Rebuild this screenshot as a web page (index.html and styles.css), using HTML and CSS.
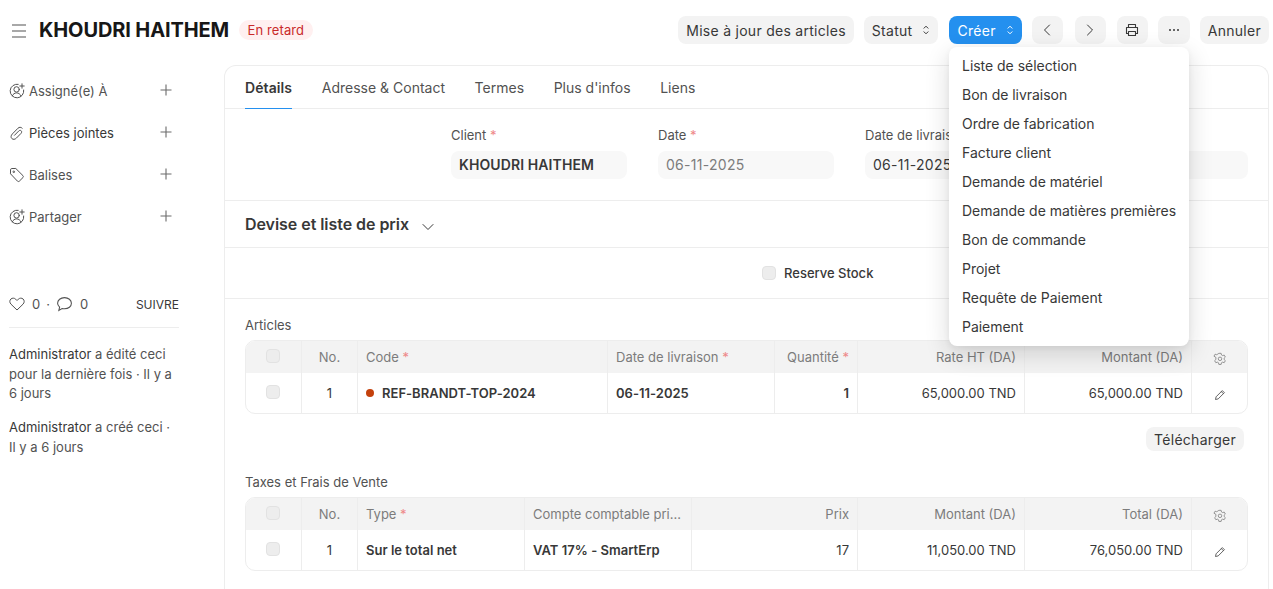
FILE: index.html
```html
<!DOCTYPE html>
<html lang="fr">
<head>
<meta charset="utf-8">
<title>KHOUDRI HAITHEM</title>
<link rel="stylesheet" href="styles.css">
</head>
<body>
<svg class="defs" width="0" height="0">
  <symbol id="i-assign" viewBox="0 0 16 16"><g fill="none" stroke="currentColor" stroke-width="1" stroke-linecap="round"><path d="M9.200 1.300A6.800 6.800 0 1 0 14.700 7"/><circle cx="7.600" cy="6.400" r="2.700"/><path d="M3.300 12.800c.7-1.800 2.400-2.900 4.300-2.900s3.600 1.100 4.300 2.900"/><path d="M13 .8v4.400M10.800 3h4.400"/></g></symbol>
  <symbol id="i-plus" viewBox="0 0 12 12"><path d="M6 .5v11M.5 6h11" fill="none" stroke="currentColor" stroke-width="1.100"/></symbol>
  <symbol id="i-clip" viewBox="0 0 16 16"><path d="M13.200 3.200c-1.200-1.300-3-1.200-4.200 0L3.400 8.900c-1.600 1.700-1.700 3.600-.5 4.700 1.200 1.100 3 1 4.500-.5l4.600-4.700c.8-.9.9-1.900.2-2.600-.7-.7-1.700-.6-2.600.3L5.500 10.300" fill="none" stroke="currentColor" stroke-linecap="round"/></symbol>
  <symbol id="i-tag" viewBox="0 0 16 16"><g fill="none" stroke="currentColor" stroke-linejoin="round"><path d="M1.500 2.800c0-.7.6-1.300 1.300-1.300h4l7.200 7.200c.5.500.5 1.300 0 1.800l-3.700 3.700c-.5.500-1.300.5-1.800 0L1.500 6.800z"/><circle cx="4.800" cy="4.800" r=".8"/></g></symbol>
  <symbol id="i-updown" viewBox="0 0 8 12"><path d="M2 4.200 4 2.200l2 2M2 7.800l2 2 2-2" fill="none" stroke="currentColor" stroke-linecap="round" stroke-linejoin="round"/></symbol>
  <symbol id="i-gear" viewBox="0 0 16 16"><g fill="none" stroke="currentColor" stroke-width=".9" stroke-linejoin="round"><path d="M6.700 1.500h2.600l.4 1.900 1.300.7 1.800-.6 1.300 2.300-1.400 1.300v1.500l1.400 1.300-1.300 2.300-1.800-.6-1.300.7-.4 1.900H6.700l-.4-1.900-1.300-.7-1.800.6-1.300-2.300 1.400-1.300V6.100L1.100 4.800l1.300-2.300 1.800.6 1.300-.7z"/><circle cx="8" cy="7.800" r="2"/></g></symbol>
  <symbol id="i-pen" viewBox="0 0 12 12"><path d="M1.500 10.500l.6-2.700L8.300 1.600l2.100 2.100-6.200 6.200zM7.300 2.600l2.100 2.100" fill="none" stroke="currentColor" stroke-width=".9" stroke-linejoin="round"/></symbol>
</svg>

<header class="topbar">
  <div class="title-area">
    <svg class="burger" width="14" height="14" viewBox="0 0 14 14"><path d="M0 1h14M0 7h14M0 13h14" stroke="#525252" stroke-width="1.100" fill="none"/></svg>
    <h1 class="title">KHOUDRI HAITHEM</h1>
    <span class="badge">En retard</span>
  </div>
  <div class="actions">
    <button class="btn">Mise à jour des articles</button>
    <button class="btn">Statut <svg class="updown" width="8" height="12"><use href="#i-updown"/></svg></button>
    <button class="btn primary">Créer <svg class="updown" width="8" height="12"><use href="#i-updown"/></svg></button>
    <button class="btn icon-btn prev"><svg width="8" height="14" viewBox="0 0 8 14"><path d="M6.500 2 1.500 7l5 5" fill="none" stroke="currentColor" stroke-linecap="round" stroke-linejoin="round"/></svg></button>
    <button class="btn icon-btn next"><svg width="8" height="14" viewBox="0 0 8 14"><path d="M1.500 2l5 5-5 5" fill="none" stroke="currentColor" stroke-linecap="round" stroke-linejoin="round"/></svg></button>
    <button class="btn icon-btn print"><svg width="14" height="14" viewBox="0 0 14 14"><g fill="none" stroke="currentColor" stroke-width="1.100" stroke-linejoin="round"><path d="M3.500 4.500V1.500h7v3M3.500 10.500H1.500v-6h11v6h-2"/><path d="M3.500 8.500h7v4h-7z"/></g></svg></button>
    <button class="btn icon-btn more"><svg width="12" height="4" viewBox="0 0 12 4"><g fill="currentColor"><circle cx="2" cy="2" r="1"/><circle cx="6" cy="2" r="1"/><circle cx="10" cy="2" r="1"/></g></svg></button>
    <button class="btn">Annuler</button>
  </div>
  <ul class="menu">
    <li>Liste de sélection</li>
    <li>Bon de livraison</li>
    <li>Ordre de fabrication</li>
    <li>Facture client</li>
    <li>Demande de matériel</li>
    <li>Demande de matières premières</li>
    <li>Bon de commande</li>
    <li>Projet</li>
    <li>Requête de Paiement</li>
    <li>Paiement</li>
  </ul>
</header>

<div class="layout">
  <aside class="sidebar">
    <div class="side-row"><svg class="side-icon" width="16" height="16"><use href="#i-assign"/></svg><span class="side-label">Assigné(e) À</span><svg class="side-plus" width="12" height="12"><use href="#i-plus"/></svg></div>
    <div class="side-row"><svg class="side-icon" width="16" height="16"><use href="#i-clip"/></svg><span class="side-label dark">Pièces jointes</span><svg class="side-plus" width="12" height="12"><use href="#i-plus"/></svg></div>
    <div class="side-row"><svg class="side-icon" width="16" height="16"><use href="#i-tag"/></svg><span class="side-label">Balises</span><svg class="side-plus" width="12" height="12"><use href="#i-plus"/></svg></div>
    <div class="side-row"><svg class="side-icon" width="16" height="16"><use href="#i-assign"/></svg><span class="side-label">Partager</span><svg class="side-plus" width="12" height="12"><use href="#i-plus"/></svg></div>

    <div class="stats">
      <svg width="16" height="14" viewBox="0 0 16 14"><path d="M8 13 2 7.200C.4 5.600.5 3.300 1.900 2 3.300.8 5.400.9 6.700 2.200L8 3.500l1.300-1.300C10.600.9 12.700.8 14.100 2c1.400 1.300 1.500 3.600-.1 5.200z" fill="none" stroke="#525252"/></svg>
      <span class="count">0</span><span class="dot">·</span>
      <svg width="17" height="16" viewBox="0 0 16 15"><path d="M8 1.500c3.700 0 6.500 2.300 6.500 5.300S11.700 12 8 12c-.8 0-1.600-.1-2.300-.3l-3 1.800.7-3C2.300 9.500 1.500 8.200 1.500 6.800c0-3 2.800-5.300 6.500-5.300z" fill="none" stroke="#525252"/></svg>
      <span class="count">0</span>
      <span class="follow">SUIVRE</span>
    </div>
    <div class="activity">
      <p><span class="who">Administrator</span> a édité ceci pour la dernière fois · Il y a 6 jours</p>
      <p><span class="who">Administrator</span> a créé ceci · Il y a 6 jours</p>
    </div>
  </aside>

  <main class="card">
    <nav class="tabs">
      <span class="tab active">Détails</span>
      <span class="tab">Adresse &amp; Contact</span>
      <span class="tab">Termes</span>
      <span class="tab">Plus d'infos</span>
      <span class="tab">Liens</span>
    </nav>

    <section class="form-grid">
      <div class="field">
        <label class="flabel">Client <i>*</i></label>
        <div class="input strong">KHOUDRI HAITHEM</div>
      </div>
      <div class="field">
        <label class="flabel">Date <i>*</i></label>
        <div class="input muted">06-11-2025</div>
      </div>
      <div class="field">
        <label class="flabel">Date de livraison</label>
        <div class="input">06-11-2025</div>
      </div>
      <div class="field">
        <label class="flabel">&nbsp;</label>
        <div class="input">&nbsp;</div>
      </div>
    </section>

    <section class="collapse-head">
      <h2>Devise et liste de prix</h2>
      <svg width="12" height="8" viewBox="0 0 12 8"><path d="M1 1.500l5 5 5-5" fill="none" stroke="#383838" stroke-linecap="round" stroke-linejoin="round"/></svg>
    </section>

    <section class="stock-row">
      <span class="check"></span>
      <span class="stock-label">Reserve Stock</span>
    </section>

    <section class="tables">
      <div class="tbl-title">Articles</div>
      <div class="tbl tbl-items">
        <div class="tr thead">
          <div class="td c"><span class="check"></span></div>
          <div class="td c">No.</div>
          <div class="td"><span>Code <i>*</i></span></div>
          <div class="td"><span>Date de livraison <i>*</i></span></div>
          <div class="td r"><span>Quantité <i>*</i></span></div>
          <div class="td r">Rate HT (DA)</div>
          <div class="td r">Montant (DA)</div>
          <div class="td c"><svg class="gear" width="14" height="14"><use href="#i-gear"/></svg></div>
        </div>
        <div class="tr tbody">
          <div class="td c"><span class="check"></span></div>
          <div class="td c">1</div>
          <div class="td strong"><span class="status-dot"></span>REF-BRANDT-TOP-2024</div>
          <div class="td strong">06-11-2025</div>
          <div class="td r strong">1</div>
          <div class="td r">65,000.00 TND</div>
          <div class="td r">65,000.00 TND</div>
          <div class="td c"><svg class="pen" width="12" height="12"><use href="#i-pen"/></svg></div>
        </div>
      </div>
      <div class="tbl-actions"><button class="btn small">Télécharger</button></div>

      <div class="tbl-title second">Taxes et Frais de Vente</div>
      <div class="tbl tbl-taxes">
        <div class="tr thead">
          <div class="td c"><span class="check"></span></div>
          <div class="td c">No.</div>
          <div class="td"><span>Type <i>*</i></span></div>
          <div class="td">Compte comptable pri...</div>
          <div class="td r">Prix</div>
          <div class="td r">Montant (DA)</div>
          <div class="td r">Total (DA)</div>
          <div class="td c"><svg class="gear" width="14" height="14"><use href="#i-gear"/></svg></div>
        </div>
        <div class="tr tbody">
          <div class="td c"><span class="check"></span></div>
          <div class="td c">1</div>
          <div class="td strong">Sur le total net</div>
          <div class="td strong">VAT 17% - SmartErp</div>
          <div class="td r">17</div>
          <div class="td r">11,050.00 TND</div>
          <div class="td r">76,050.00 TND</div>
          <div class="td c"><svg class="pen" width="12" height="12"><use href="#i-pen"/></svg></div>
        </div>
      </div>
    </section>
  </main>
</div>
</body>
</html>
```

FILE: styles.css
```css
* { box-sizing: border-box; }
html, body { margin: 0; height: 589px; overflow: hidden; }
body { font-family: Inter, "Liberation Sans", sans-serif; font-size: 13px; color: #383838; background: #fff; }
.defs { position: absolute; }

.topbar { position: relative; height: 65px; padding: 16px 4px 0 12px; display: flex; justify-content: space-between; align-items: flex-start; }
.title-area { display: flex; align-items: center; height: 28px; }
.burger { margin-top: 1px; }
.title { margin: 0 0 0 13px; font-size: 20px; font-weight: 700; color: #171717; line-height: 28px; letter-spacing: -0.12px; }
.badge { margin-left: 10px; height: 20px; line-height: 20px; padding: 0 8.5px; border-radius: 10px; background: #fff0f0; color: #c92a2a; font-size: 13px; letter-spacing: .1px; }

.actions { display: flex; gap: 10px; }
.btn { font-family: inherit; font-size: 14px; letter-spacing: .02em; height: 28px; padding: 0 8px; border: 0; border-radius: 8px; background: #f3f3f3; color: #383838; display: inline-flex; align-items: center; gap: 10px; white-space: nowrap; }
.btn.primary { background: #2490ef; color: #fff; margin-left: 1px; }
.icon-btn { width: 31px; padding: 0; justify-content: center; }
.icon-btn.next { margin-left: 2px; }
.icon-btn.print { margin-left: 1px; }
.icon-btn.more { width: 32px; }
.btn.small { height: 24px; }

.menu { position: absolute; left: 949px; top: 47px; width: 240px; margin: 0; padding: 4px 0 5px; list-style: none; background: #fff; border-radius: 8px; box-shadow: 0 2px 6px rgba(23,23,23,.05), 0 8px 24px rgba(23,23,23,.16); z-index: 5; }
.menu li { height: 29px; line-height: 29px; padding-left: 13px; font-size: 14px; letter-spacing: -.03px; color: #383838; white-space: nowrap; }

.layout { display: flex; height: 524px; padding-left: 9px; padding-right: 4px; gap: 45px; }
.sidebar { width: 170px; flex: none; padding-top: 5px; }
.side-row { display: flex; align-items: center; height: 42px; }
.side-icon { color: #525252; flex: none; }
.side-label { margin-left: 4px; font-size: 13px; color: #525252; }
.side-label.dark { color: #383838; }
.side-plus { margin-left: auto; margin-right: 7px; margin-top: -2px; color: #6b6b6b; }

.stats { display: flex; align-items: center; margin-top: 56px; height: 20px; font-size: 13px; color: #525252; }
.count { margin-left: 7px; }
.dot { margin: 0 6px; }
.follow { margin-left: auto; font-size: 12px; color: #383838; }
.activity { margin-top: 13px; padding-top: 17px; border-top: 1px solid #ededed; font-size: 13px; line-height: 19.7px; color: #525252; }
.activity p { margin: 0 0 14px; }
.who { color: #383838; }

.card { flex: 1; min-width: 0; border: 1px solid #ededed; border-bottom: 0; border-radius: 12px 12px 0 0; }
.tabs { display: flex; gap: 29.6px; height: 43px; padding-left: 20px; border-bottom: 1px solid #ededed; }
.tab { font-size: 14px; line-height: 44px; color: #525252; height: 43px; }
.tab.active { font-weight: 600; color: #383838; letter-spacing: .1px; border-bottom: 1px solid #2490ef; }

.form-grid { display: grid; grid-template-columns: repeat(4, 176px); column-gap: 31px; justify-content: end; padding: 18px 20px 21px 0; border-bottom: 1px solid #ededed; }
.flabel { display: block; font-size: 13px; line-height: 16px; margin-bottom: 8px; color: #525252; white-space: nowrap; }
i { font-style: normal; color: #e88; }
.input { height: 28px; line-height: 28px; padding: 0 8px; border-radius: 8px; background: #f8f8f8; font-size: 14px; letter-spacing: .02em; color: #383838; white-space: nowrap; overflow: hidden; }
.input.strong { font-weight: 600; letter-spacing: .1px; }
.input.muted { color: #7c7c7c; }

.collapse-head { display: flex; align-items: center; gap: 13px; height: 47px; padding-left: 20px; border-bottom: 1px solid #ededed; }
.collapse-head h2 { margin: 0; font-size: 16px; font-weight: 600; letter-spacing: -.05px; color: #383838; }
.collapse-head svg { margin-top: 5px; }

.stock-row { display: flex; align-items: center; height: 51px; padding-left: 537px; border-bottom: 1px solid #ededed; }
.check { display: inline-block; width: 14px; height: 14px; border-radius: 4px; background: #ededed; border: 1px solid #e2e2e2; }
.stock-label { margin-left: 8px; font-size: 13px; font-weight: 500; color: #383838; }

.tables { padding: 18px 20px 0; }
.tbl-title { font-size: 13px; line-height: 16px; margin-bottom: 7px; color: #525252; }
.tbl-title.second { margin-top: 23px; }
.tbl { border: 1px solid #ededed; border-radius: 10px; overflow: hidden; }
.tr { display: grid; }
.tbl-items .tr { grid-template-columns: 56px 56px 250px 167px 83px 167px 167px 1fr; }
.tbl-taxes .tr { grid-template-columns: 56px 56px 167px 167px 166px 167px 167px 1fr; }
.thead { height: 32px; background: #f3f3f3; color: #7c7c7c; font-size: 13px; }
.tbody { height: 40px; font-size: 13px; color: #383838; }
.td { display: flex; align-items: center; padding: 0 8px; border-right: 1px solid #ededed; white-space: nowrap; overflow: hidden; }
.td:last-child { border-right: 0; }
.td.c { justify-content: center; }
.td.r { justify-content: flex-end; }
.td.strong { font-weight: 600; letter-spacing: .02px; }
.td .check { margin: 0 2px 2px 0; }
.status-dot { width: 8px; height: 8px; border-radius: 50%; background: #c4410c; margin-right: 8px; flex: none; }
.gear { color: #7c7c7c; margin: 3px 0 0 1px; }
.pen { color: #525252; margin: 3px 0 0 1px; }
.tbl-actions { display: flex; justify-content: flex-end; padding: 13px 4px 0 0; }
```
